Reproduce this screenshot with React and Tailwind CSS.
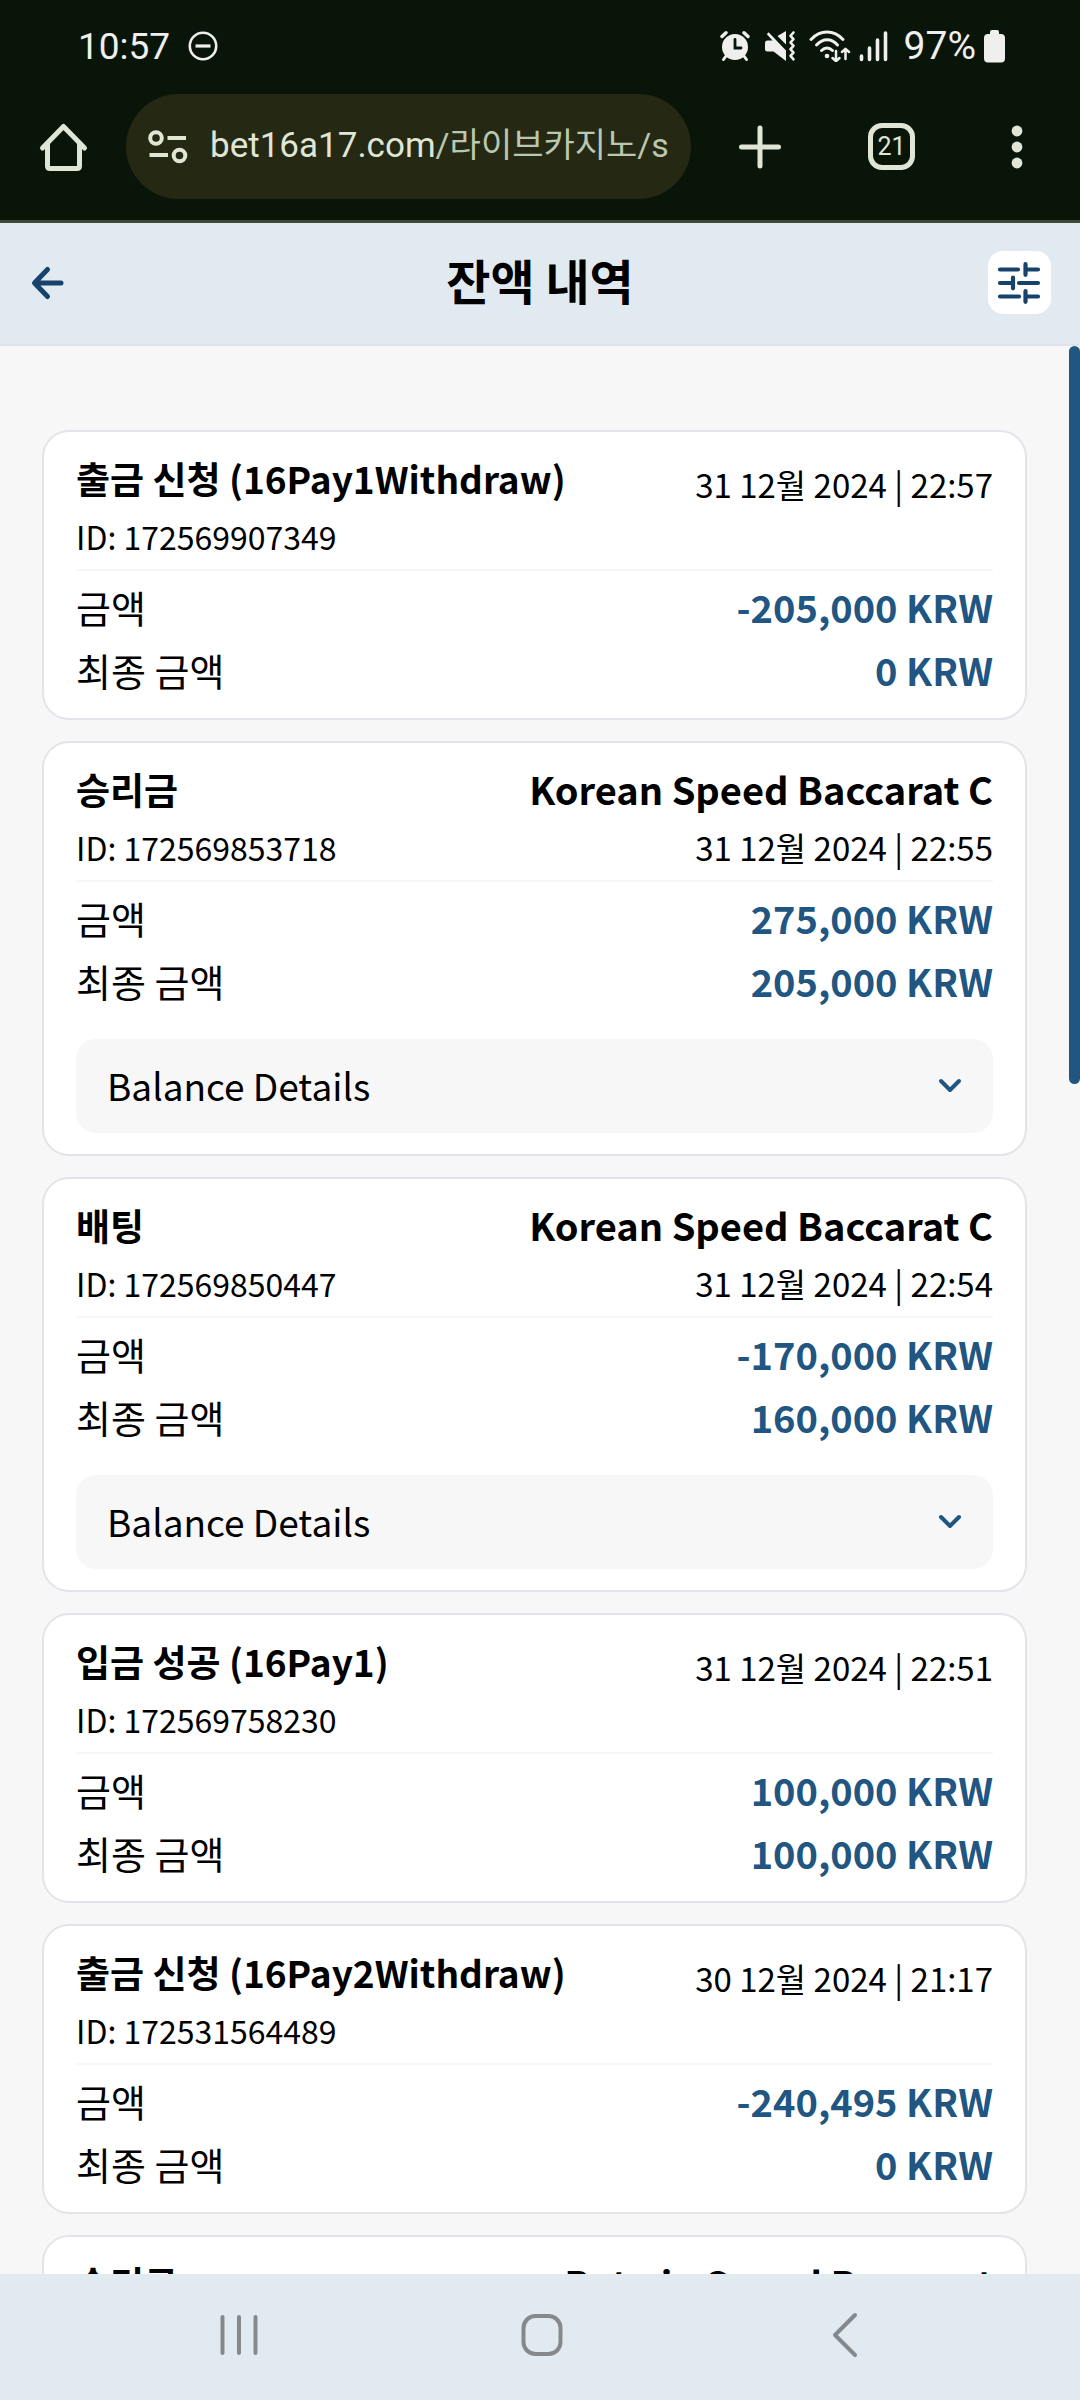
import React, { useState } from "react";

const transactions = [
  {
    id: "172569907349",
    title: "출금 신청 (16Pay1Withdraw)",
    date: "31 12월 2024 | 22:57",
    amount: "-205,000 KRW",
    finalAmount: "0 KRW",
  },
  {
    id: "172569853718",
    title: "승리금",
    game: "Korean Speed Baccarat C",
    date: "31 12월 2024 | 22:55",
    amount: "275,000 KRW",
    finalAmount: "205,000 KRW",
  },
  {
    id: "172569850447",
    title: "배팅",
    game: "Korean Speed Baccarat C",
    date: "31 12월 2024 | 22:54",
    amount: "-170,000 KRW",
    finalAmount: "160,000 KRW",
  },
  {
    id: "172569758230",
    title: "입금 성공 (16Pay1)",
    date: "31 12월 2024 | 22:51",
    amount: "100,000 KRW",
    finalAmount: "100,000 KRW",
  },
  {
    id: "172531564489",
    title: "출금 신청 (16Pay2Withdraw)",
    date: "30 12월 2024 | 21:17",
    amount: "-240,495 KRW",
    finalAmount: "0 KRW",
  },
  {
    id: "172531561204",
    title: "승리금",
    game: "Betwin Speed Baccarat",
    date: "30 12월 2024 | 21:16",
    amount: "240,495 KRW",
    finalAmount: "240,495 KRW",
  },
];

function StatusBar() {
  return (
    <div className="flex h-[94px] items-center justify-between pr-[75px] pb-[2px] pl-[78px] font-[Roboto,sans-serif] text-[37px] leading-none text-[#efefee]">
      <div className="flex items-center gap-[18px]">
        <span>10:57</span>
        <svg width="30" height="30" viewBox="0 0 30 30" fill="none" stroke="currentColor">
          <circle cx="15" cy="15" r="13.2" strokeWidth="2.6" />
          <path d="M7.5 15h15" strokeWidth="3.2" />
        </svg>
      </div>

      <div className="flex items-center">
        {/* Alarm */}
        <svg width="30" height="32" viewBox="0 0 30 32" fill="none" stroke="currentColor" strokeLinecap="round">
          <path d="M2 6.5 6 2.7M28 6.5 24 2.7" strokeWidth="3.4" />
          <path d="M6 26l-2.5 3.5M24 26l2.5 3.5" strokeWidth="3" />
          <circle cx="15" cy="17" r="13" fill="currentColor" stroke="none" />
          <path d="M15 9.5V18h6" stroke="#0a150a" strokeWidth="2.8" />
        </svg>
        {/* Muted with vibration */}
        <svg className="ml-[15px]" width="31" height="32" viewBox="0 0 31 32" fill="none" stroke="currentColor" strokeLinecap="round">
          <path
            d="M2.500 10.500H7.500L1.800 4.200 3.600 2.200 21 20.500V31L8.500 21.500H2.500Q0 21.500 0 19V13Q0 10.500 2.500 10.500zM21 1v13.500L12.500 6z"
            fill="currentColor"
            stroke="none"
          />
          <path d="M28.500 2.500l-3 3.300 3 3.400-3 3.300 3 3.400-3 3.300 3 3.400-3 3.300 3 3.400" strokeWidth="2.6" strokeLinejoin="round" />
        </svg>
        {/* Wifi */}
        <svg className="ml-[13px]" width="42" height="32" viewBox="0 0 42 32" fill="none" stroke="currentColor" strokeLinecap="round">
          <path d="M2 9.500C11-.5 25-.5 34 9.500" strokeWidth="3" />
          <path d="M7.500 15C14 8 22.500 8 28.500 15" strokeWidth="3" />
          <path d="M12.500 20.500c3.500-3.500 7.500-3.500 11 0" strokeWidth="3" />
          <circle cx="18" cy="26" r="2.3" fill="currentColor" stroke="none" />
          <path d="M27 21v10M23.500 28l3.500 3.200 3.500-3.200M36.500 29V19M33 22l3.500-3.200L40 22" strokeWidth="2.5" strokeLinejoin="round" />
        </svg>
        {/* Signal */}
        <svg className="ml-[8px]" width="30" height="32" viewBox="0 0 30 32" stroke="currentColor" strokeWidth="3.6" strokeLinecap="round">
          <path d="M2.500 26v3.500M10.500 18v11.500M18.500 10v19.500M26.500 3v26.500" />
        </svg>
        <span className="ml-[15px] text-[39px]">97%</span>
        <svg className="ml-[8px]" width="21" height="34" viewBox="0 0 21 34" fill="currentColor">
          <path d="M6 5V3q0-2 2-2h5q2 0 2 2v2h2q4 0 4 4v20.500q0 4-4 4H4q-4 0-4-4V9q0-4 4-4z" />
        </svg>
      </div>
    </div>
  );
}

function BrowserBar() {
  return (
    <div className="flex h-[126px] items-start pr-[50px] pl-[36px] text-[#dfe6d6]">
      <button type="button" aria-label="Home" className="flex h-[105px] items-center">
        <svg width="54" height="54" viewBox="0 0 54 54" fill="none" stroke="currentColor" strokeWidth="5" strokeLinecap="round" strokeLinejoin="round">
          <path d="M6.500 28 27.500 6.500 48.500 28" />
          <path d="M11.500 24v22q0 2.500 2.500 2.500h27q2.500 0 2.500-2.500V24" />
        </svg>
      </button>
      <button
        type="button"
        className="ml-[36px] flex h-[105px] min-w-0 flex-1 items-center overflow-hidden rounded-full bg-[#252813] pr-[12px] pl-[22px] font-[Roboto,'Noto_Sans_CJK_KR',sans-serif] text-[35px]"
      >
        <svg className="shrink-0" width="40" height="36" viewBox="0 0 40 36" fill="none" stroke="currentColor" strokeWidth="4">
          <circle cx="8" cy="9" r="5.800" />
          <path d="M19.500 9H38M1.500 26H20" />
          <circle cx="31.500" cy="26.500" r="5.800" />
        </svg>
        <span className="ml-[22px] whitespace-nowrap">
          bet16a17.com<span className="text-[34px] text-[#bac8b1]">/라이브카지노/s</span>
        </span>
      </button>
      <button type="button" aria-label="New tab" className="ml-[47px] flex h-[105px] items-center">
        <svg width="44" height="44" viewBox="0 0 44 44" stroke="currentColor" strokeWidth="5" strokeLinecap="round">
          <path d="M22 3v38M3.500 22h37" />
        </svg>
      </button>
      <div className="flex h-[105px] items-center">
        <button
          type="button"
          className="ml-[86px] flex size-[47px] items-center justify-center rounded-[14px] border-5 border-current font-[Roboto,sans-serif] text-[25px] leading-none"
        >
          21
        </button>
      </div>
      <button type="button" aria-label="Menu" className="ml-[89px] flex h-[105px] items-center">
        <svg width="26" height="46" viewBox="0 0 26 46" fill="currentColor">
          <circle cx="13" cy="7" r="5.400" />
          <circle cx="13" cy="23" r="5.400" />
          <circle cx="13" cy="39" r="5.400" />
        </svg>
      </button>
    </div>
  );
}

function PageHeader() {
  return (
    <header className="flex h-[123px] shrink-0 items-start justify-between border-b-2 border-[#e0e3e8] bg-[#e2eaf1] px-[29px] pt-[28px]">
      <button type="button" aria-label="Back" className="flex size-[63px] items-center text-[#16426b]">
        <svg width="38" height="38" viewBox="0 0 38 38" fill="none" stroke="currentColor" strokeWidth="5" strokeLinecap="round" strokeLinejoin="round">
          <path d="M32 19H6M18.500 5.500 5.500 19l13 13.500" />
        </svg>
      </button>
      <h1 className="text-[48px] leading-[56px] font-bold">잔액 내역</h1>
      <button
        type="button"
        aria-label="Filter"
        className="flex size-[63px] items-center justify-center rounded-[15px] bg-white text-[#16426b]"
      >
        <svg width="44" height="44" viewBox="0 0 44 44" fill="none" stroke="currentColor" strokeWidth="4.200" strokeLinecap="round">
          <path d="M3 8.500h18M29 8.500h12M28.500 3.200v10.600" />
          <path d="M3 22h12M22 22h19M16 16.700v10.600" />
          <path d="M3 35.500h19M29 35.500h12M28.500 30.200v10.600" />
        </svg>
      </button>
    </header>
  );
}

function TransactionCard({ item }) {
  const [open, setOpen] = useState(false);

  return (
    <li className="rounded-[27px] border-2 border-[#e2e4e9] bg-white px-[32px] pt-[18px] pb-[17px]">
      <div className="flex justify-between border-b-2 border-[#f7f7f7] pb-[3px]">
        <div>
          <h2 className="text-[37px] leading-[56px] font-bold">{item.title}</h2>
          <p className="text-[32px] leading-[60px]">ID: {item.id}</p>
        </div>
        <div className="text-right text-[33px]">
          {item.game && <p className="text-[38px] leading-[56px] font-bold">{item.game}</p>}
          <p className={item.game ? "leading-[60px]" : "leading-[68px]"}>{item.date}</p>
        </div>
      </div>

      <dl className="mt-[4px] text-[38px] leading-[63px]">
        <div className="flex justify-between">
          <dt>금액</dt>
          <dd className="font-bold text-[#205681]">{item.amount}</dd>
        </div>
        <div className="flex justify-between">
          <dt>최종 금액</dt>
          <dd className="font-bold text-[#205681]">{item.finalAmount}</dd>
        </div>
      </dl>

      {item.game && (
        <button
          type="button"
          aria-expanded={open}
          onClick={() => setOpen(!open)}
          className="mt-[27px] mb-[4px] flex h-[94px] w-full items-center justify-between rounded-[20px] bg-[#f7f7f7] px-[31px] text-[37px]"
        >
          Balance Details
          <svg width="24" height="18" viewBox="0 0 24 18" fill="none" stroke="#205681" strokeWidth="4" strokeLinecap="round" strokeLinejoin="round">
            <path d="M3 4l9 9 9-9" />
          </svg>
        </button>
      )}
    </li>
  );
}

function SystemNav() {
  return (
    <nav className="grid h-[126px] shrink-0 grid-cols-3 items-center bg-[#e2eaf1] pr-[84px] pb-[4px] pl-[87px] text-[#85898c]">
      <button type="button" aria-label="Recent apps" className="flex justify-center">
        <svg width="42" height="44" viewBox="0 0 42 44" stroke="currentColor" strokeWidth="4" strokeLinecap="round">
          <path d="M4.500 4v36M21 4v36M37.500 4v36" />
        </svg>
      </button>
      <button type="button" aria-label="Home screen" className="flex justify-center">
        <svg width="42" height="44" viewBox="0 0 42 44" fill="none" stroke="currentColor" strokeWidth="4">
          <rect x="2.500" y="3" width="37" height="38" rx="12" />
        </svg>
      </button>
      <button type="button" aria-label="Back" className="flex justify-center">
        <svg width="26" height="46" viewBox="0 0 26 46" fill="none" stroke="currentColor" strokeWidth="4" strokeLinecap="round" strokeLinejoin="round">
          <path d="M23 3 3 23l20 20" />
        </svg>
      </button>
    </nav>
  );
}

export default function App() {
  return (
    <div className="flex h-screen flex-col bg-[#f7f7f7] font-['Noto_Sans_CJK_KR',sans-serif] text-black">
      <div className="shrink-0 border-b-3 border-[#3f4a38] bg-[#0a150a]">
        <StatusBar />
        <BrowserBar />
      </div>
      <PageHeader />
      <main className="relative min-h-0 flex-1">
        <ul className="flex h-full flex-col gap-[21px] overflow-y-auto pt-[84px] pr-[53px] pb-[84px] pl-[42px] [scrollbar-width:none] *:shrink-0">
          {transactions.map((item) => (
            <TransactionCard key={item.id} item={item} />
          ))}
        </ul>
        {/* Scroll thumb */}
        <div className="absolute top-0 right-0 h-[738px] w-[11px] rounded-[6px] bg-[#205681]" />
      </main>
      <SystemNav />
    </div>
  );
}
